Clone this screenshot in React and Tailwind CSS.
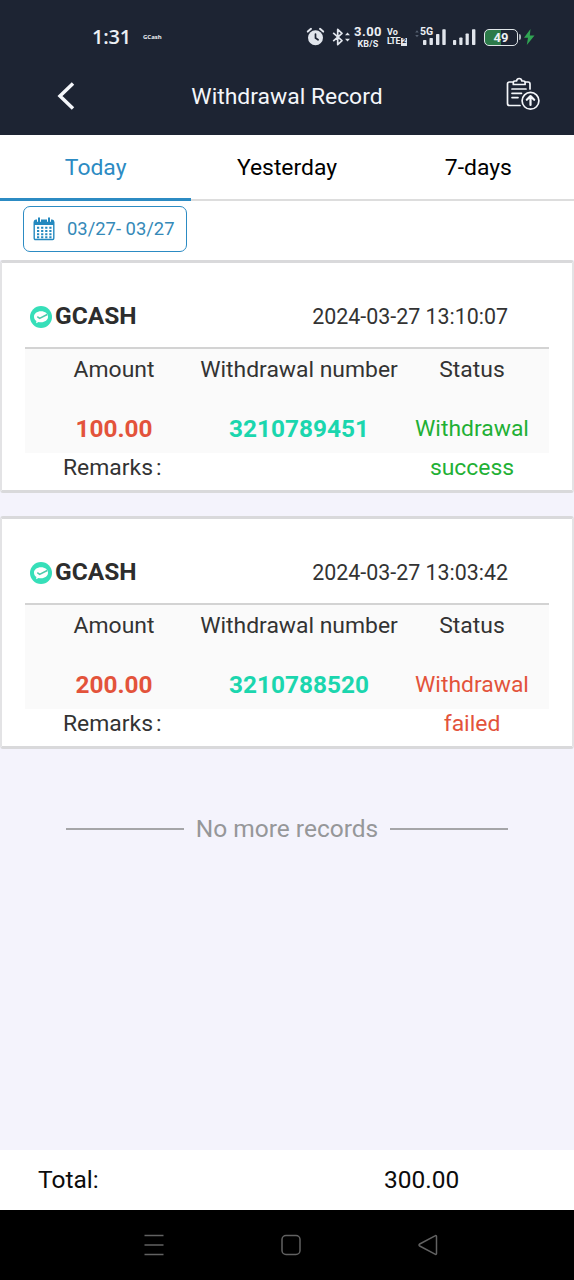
const records = [
  { date: '2024-03-27 13:10:07', amount: '100.00', number: '3210789451', status: ['Withdrawal', 'success'], ok: true },
  { date: '2024-03-27 13:03:42', amount: '200.00', number: '3210788520', status: ['Withdrawal', 'failed'], ok: false },
];

function StatusBar() {
  return (
    <div className="flex h-[74px] items-center text-[#eceff4]">
      <span className="ml-[92px] w-[51px] whitespace-nowrap font-['Open_Sans'] text-[20px] font-semibold leading-none tracking-[-0.2px]">1:31</span>
      <span className="w-[163px] font-['Open_Sans'] text-[6px] font-bold leading-none">GCash</span>
      <svg className="h-[20px] w-[20px] shrink-0" viewBox="0 0 20 20" fill="none">
        <circle cx="9.5" cy="10.7" r="7.5" fill="#e1e5ec" />
        <path d="M1.8 4.6 5 1.8M17.2 4.6 14 1.8" stroke="#e1e5ec" strokeWidth="2" strokeLinecap="round" />
        <path d="M9.5 7v4l2.6 1.8" stroke="#1d2433" strokeWidth="1.7" strokeLinecap="round" />
      </svg>
      <svg className="ml-[6px] h-[20px] w-[18px] shrink-0" viewBox="0 0 18 20" fill="none">
        <path d="M1.2 5.8 10 13.6 5.7 17.6V2.4L10 6.4 1.2 14.2" stroke="#e1e5ec" strokeWidth="1.7" strokeLinejoin="round" />
        <path d="M13 8.2 15.5 5.5 18 8.2ZM13 11.8l2.5 2.7 2.5-2.7Z" fill="#e1e5ec" />
      </svg>
      <div className="ml-[4px] flex w-[28px] shrink-0 flex-col items-center font-['Roboto'] font-bold">
        <span className="text-[13px] leading-[14px] tracking-[0.5px]">3.00</span>
        <span className="text-[9px] leading-[11px] tracking-[0.2px]">KB/S</span>
      </div>
      <div className="ml-[5px] flex w-[21px] shrink-0 flex-col items-start font-['Roboto'] font-bold">
        <span className="text-[9px] leading-[9px]">Vo</span>
        <span className="flex items-center text-[9px] leading-[9px] tracking-[-0.5px]">
          LTE<span className="ml-[1px] flex h-[8px] w-[6px] items-center justify-center bg-[#e1e5ec] text-[7px] leading-none text-[#1d2433]">2</span>
        </span>
      </div>
      <div className="relative ml-[6px] h-[20px] w-[33px] shrink-0">
        <svg className="h-[20px] w-[33px]" viewBox="0 0 33 20" fill="#e1e5ec">
          <path d="M1.2 5.500 3 3.300 4.800 5.500ZM1.200 8 3 10.200 4.800 8Z" fill="#566071" />
          <rect x="9" y="13" width="3.4" height="5" rx=".7" />
          <rect x="15.5" y="11" width="3.4" height="7" rx=".7" />
          <rect x="22" y="7" width="3.4" height="11" rx=".7" />
          <rect x="28.3" y="2.2" width="3.4" height="15.8" rx=".7" />
        </svg>
        <span className="absolute left-[6px] top-0 font-['Roboto'] text-[10.5px] font-bold leading-[10px]">5G</span>
      </div>
      <svg className="ml-[5px] h-[20px] w-[24px] shrink-0" viewBox="0 0 24 20" fill="#e1e5ec">
        <rect x="1" y="13" width="3.2" height="5" rx=".7" />
        <rect x="7.3" y="10.500" width="3.2" height="7.5" rx=".7" />
        <rect x="13.6" y="6.5" width="3.2" height="11.5" rx=".7" />
        <rect x="20" y="2.2" width="3.4" height="15.8" rx=".7" />
      </svg>
      <div className="ml-[8px] flex h-[17px] w-[34px] shrink-0 items-center justify-center rounded-[5px] border-[1.5px] border-[#dfe5e8] bg-[linear-gradient(90deg,#2c7a49_50%,#1d2433_50%)] font-['Roboto'] text-[13px] font-bold leading-none">
        49
      </div>
      <span className="ml-[1px] h-[6px] w-[2px] rounded-r bg-[#aab1ba]" />
      <svg className="ml-[2px] h-[18px] w-[12px] shrink-0" viewBox="0 0 12 18" fill="#30a553">
        <path d="M7.500 1 1 9.800h4L3.800 17 11.500 7.600H6.800Z" />
      </svg>
    </div>
  );
}

function ClipboardUp() {
  return (
    <svg className="h-[34px] w-[36px]" viewBox="0 0 36 34" fill="none" stroke="#f4f6fa" strokeWidth="1.7" strokeLinecap="round" strokeLinejoin="round">
      <path d="M7.5 5H4.5a2 2 0 0 0-2 2v19.500a2 2 0 0 0 2 2H15M20.500 5h2.500a2 2 0 0 1 2 2v5" />
      <path d="M8.300 7.500h11.800V5.300c0-.8-.8-1.300-1.600-1.300h-1.600c-.3-1.600-1.300-2.500-2.700-2.500s-2.400.9-2.700 2.500H9.900c-.8 0-1.600.5-1.600 1.300Z" />
      <path d="M7 12h14M7 16.300h9.500M7 20.600h6" />
      <circle cx="25.500" cy="23.800" r="8.400" />
      <path d="M25.500 28v-8.500M21.800 22.800l3.700-3.700 3.700 3.700" strokeWidth="2.200" />
    </svg>
  );
}

function CalendarIcon() {
  return (
    <svg className="h-[24px] w-[22px]" viewBox="0 0 22 24" fill="none">
      <path d="M1 4.500a2 2 0 0 1 2-2h16a2 2 0 0 1 2 2V8H1Z" fill="#2489bf" />
      <rect x="1.200" y="4" width="19.600" height="18.500" rx="1.200" stroke="#2489bf" strokeWidth="1.400" />
      <path d="M6 0.800v4M16 0.800v4" stroke="#fff" strokeWidth="4" />
      <path d="M6 1.200v3.500M16 1.200v3.500" stroke="#2489bf" strokeWidth="2" strokeLinecap="round" />
      <path d="M4 10.800h14.500M4 14h14.500M4 17.200h14.500M4 20.200h14.500" stroke="#2489bf" strokeWidth="1.900" strokeDasharray="2.200 1.900" />
    </svg>
  );
}

function GcashLogo() {
  return (
    <svg className="h-[22px] w-[22px]" viewBox="0 0 22 22">
      <circle cx="11" cy="11" r="11" fill="#36dfb9" />
      <path d="M11 5.200c-4.100 0-7 2.400-7 5.500 0 1.800.9 3.300 2.400 4.300l-.3 2.200 2.500-1.300c.8.200 1.600.3 2.400.3 4.100 0 7-2.400 7-5.500s-2.900-5.500-7-5.500Z" fill="#fff" />
      <path d="m7.300 10.700 2.300 1.700 7.600-3.900" fill="none" stroke="#4cc9ab" strokeWidth="1.500" />
    </svg>
  );
}

function RecordCard({ record }) {
  return (
    <section className="h-[233px] rounded-[3px] border-x-2 border-y-[3px] border-x-[#e3e3e5] border-y-[#d9d9db] bg-white px-[23px] text-[#333333]">
      <div className="flex h-[86px] items-center justify-between border-b-2 border-[#d3d3d3] pl-[5px] pr-[41px] pt-[23px]">
        <div className="flex items-center gap-[3px]">
          <GcashLogo />
          <span className="-mt-[1px] text-[24.5px] font-bold leading-none text-[#2d2d2d]">GCASH</span>
        </div>
        <span className="whitespace-nowrap text-[21.4px] leading-none">{record.date}</span>
      </div>
      <div className="h-[104px] bg-[#fafafa]">
        <div className="grid h-[42px] grid-cols-[178px_192px_154px] items-center text-center text-[22.9px] leading-none">
          <span>Amount</span>
          <span className="justify-self-center whitespace-nowrap">Withdrawal number</span>
          <span>Status</span>
        </div>
        <div className="grid h-[62px] grid-cols-[178px_192px_154px] pt-[19px] text-center text-[24.4px] leading-[38.500px]">
          <span className="font-bold text-[#e3533b]">{record.amount}</span>
          <span className="font-bold text-[#1bd6ae]">{record.number}</span>
          <span className={record.ok ? 'text-[22.9px] text-[#1fb035]' : 'text-[22.9px] text-[#e3533b]'}>
            {record.status[0]}
            <br />
            {record.status[1]}
          </span>
        </div>
      </div>
      <div className="flex h-[30px] items-center pl-[38px] text-[22.9px] leading-none">
        Remarks<span className="ml-[3px]">:</span>
      </div>
    </section>
  );
}

export default function App() {
  return (
    <div className="flex h-[1280px] w-[574px] flex-col overflow-hidden bg-[#f4f3fc] font-['Roboto',sans-serif]">
      <header className="h-[135px] shrink-0 bg-[#1d2433]">
        <StatusBar />
        <div className="grid h-[44px] grid-cols-[132px_310px_132px] items-center text-[#f4f6fa]">
          <svg className="ml-[56px] h-[30px] w-[20px]" viewBox="0 0 20 30" fill="none" stroke="currentColor" strokeWidth="3.500">
            <path d="M17 2.500 4 15 17 27.500" />
          </svg>
          <h1 className="pt-[2px] text-center text-[22.9px] leading-none">Withdrawal Record</h1>
          <div className="-mt-[4px] ml-[63px]">
            <ClipboardUp />
          </div>
        </div>
      </header>

      <nav className="grid h-[66px] shrink-0 grid-cols-3 bg-white text-[22.9px] leading-none text-black">
        <button className="border-b-[3px] border-[#2c8bc3] pt-[4px] text-[#2c8bc3]">Today</button>
        <button className="border-b-2 border-[#dddddd] pt-[2px]">Yesterday</button>
        <button className="border-b-2 border-[#dddddd] pt-[2px]">7-days</button>
      </nav>

      <div className="h-[59px] shrink-0 bg-white pl-[23px] pt-[5px]">
        <button className="flex h-[46px] w-[164px] items-center rounded-[7px] border-[1.500px] border-[#2c8bc3] pl-[9px] text-[18.4px] leading-none text-[#3589b8]">
          <CalendarIcon />
          <span className="ml-[12px] whitespace-nowrap">03/27- 03/27</span>
        </button>
      </div>

      <main className="flex grow flex-col">
        <div className="flex flex-col gap-[23px]">
          {records.map((r) => (
            <RecordCard key={r.number} record={r} />
          ))}
        </div>
        <div className="mt-[68px] flex items-center justify-center gap-[12px] text-[24.5px] leading-none text-[#969799]">
          <span className="h-[2px] w-[118px] bg-[#a5a5a8]" />
          <span className="whitespace-nowrap">No more records</span>
          <span className="h-[2px] w-[118px] bg-[#a5a5a8]" />
        </div>
      </main>

      <footer className="flex h-[60px] shrink-0 items-center bg-white text-[24.5px] leading-none text-[#0c0c0c]">
        <span className="ml-[38px] w-[346px]">Total:</span>
        <span>300.00</span>
      </footer>

      <div className="flex h-[70px] shrink-0 items-center bg-black">
        <svg className="ml-[143px] h-[22px] w-[22px]" viewBox="0 0 22 22" fill="none" stroke="#626262" strokeWidth="1.500">
          <path d="M1.500 1.500h19M1.500 11h19M1.500 20.500h19" />
        </svg>
        <svg className="ml-[115px] h-[22px] w-[22px]" viewBox="0 0 22 22" fill="none" stroke="#626262" strokeWidth="1.500">
          <rect x="2" y="1.500" width="18" height="19" rx="4" />
        </svg>
        <svg className="ml-[115px] h-[22px] w-[22px]" viewBox="0 0 22 22" fill="none" stroke="#626262" strokeWidth="1.500" strokeLinejoin="round">
          <path d="M19.500 2.600v16.800c0 .9-.8 1.200-1.500.8L2.700 12c-.9-.5-.9-1.500 0-2L18 1.800c.7-.4 1.500-.1 1.500.8Z" />
        </svg>
      </div>
    </div>
  );
}
